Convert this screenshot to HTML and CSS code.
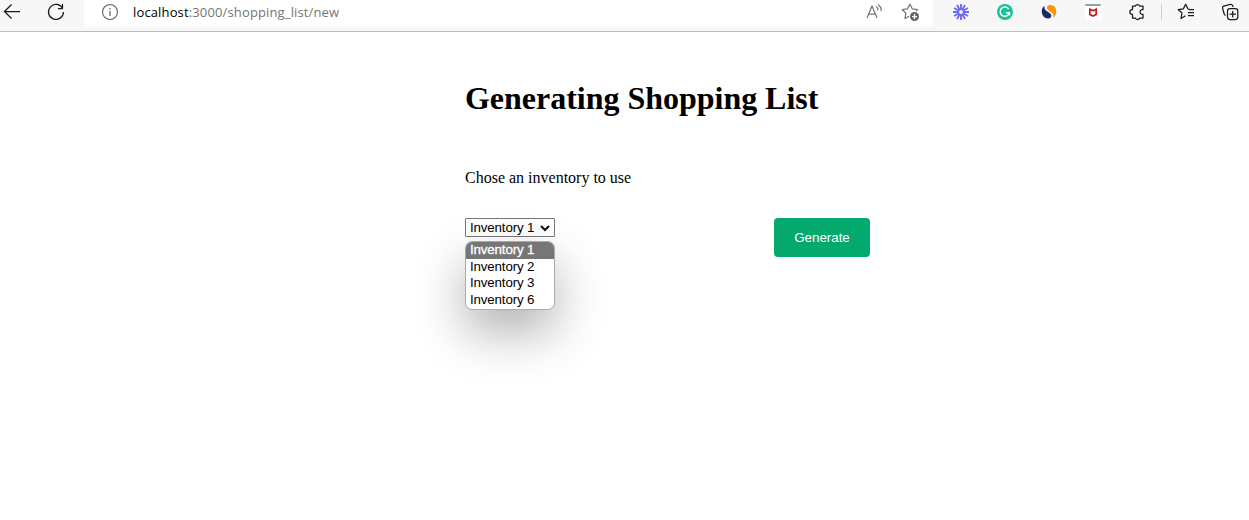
FILE: index.html
```html
<!DOCTYPE html>
<html lang="en">
<head>
<meta charset="utf-8">
<title>Generating Shopping List</title>
<link rel="stylesheet" href="styles.css">
</head>
<body>
<header class="toolbar">
  <svg class="icon back" viewBox="0 0 24 24"><path d="M20 11.5H4.5M11.500 4.500L4.500 11.500L11.500 18.500"/></svg>
  <svg class="icon reload" viewBox="0 0 24 24"><path d="M18.700 8.500A7.500 7.500 0 1 0 19.500 12M18.500 4V8.500H14"/></svg>
  <div class="address">
    <svg class="icon muted" viewBox="0 0 24 24"><circle cx="12" cy="12" r="7.500"/><path d="M12 11V16M12 8V9.500" stroke-width="1.400"/></svg>
    <span class="url">localhost<span class="path">:3000/shopping_list/new</span></span>
    <svg class="icon muted read" viewBox="0 0 24 24"><path d="M5 18L10 6L15 18M6.800 14H13.200M14.300 6.500Q16 8 16 10.500M16 4.500Q19.400 7 19.300 11"/></svg>
    <svg class="icon muted" viewBox="0 0 24 24"><path d="M11 16.300L7 18.500L7.900 13.200L4.200 9.700L9.400 8.900L12 4.200L14.300 8.900L19.500 9.700L18.300 11"/><circle cx="16.500" cy="16.500" r="4.500" fill="#666" stroke="none"/><path d="M14 16.500H19M16.500 14V19" stroke="#fff"/></svg>
  </div>
  <div class="extensions">
    <svg class="icon" viewBox="0 0 24 24"><path d="M12 4V20M4 12H20M8 5.100L16 18.900M16 5.100L8 18.900M5.100 8L18.900 16M5.100 16L18.900 8" stroke="#6f69f7" stroke-width="1.900"/><circle cx="12" cy="12" r="2.800" fill="#f7f7f7" stroke="#6f69f7" stroke-width="1.700"/></svg>
    <svg class="icon" viewBox="0 0 24 24"><circle cx="12" cy="12" r="8" fill="#15c39a" stroke="none"/><path d="M15.800 9A4.700 4.700 0 1 0 16.500 12.700H12.800M16.500 12.700V15.300" stroke="#fff" stroke-width="1.500"/></svg>
    <svg class="icon" viewBox="0 0 24 24"><path d="M8 5.500C3.500 8 3.800 15 8 17.700C11.500 19.500 14.500 18 14.300 15.500C14 12.500 8.500 11.500 7.500 8.500C7.200 7 7.500 6 8 5.500Z" fill="#202b5b" stroke="none"/><path d="M15.800 18C20.500 15.500 20.500 8 16 5.600C12.500 4 9.800 5.500 10 8C10.300 11 15.800 12 16.400 15C16.600 16.300 16.300 17.300 15.800 18Z" fill="#ff9500" stroke="none"/></svg>
    <svg class="icon" viewBox="0 0 24 24"><path d="M4 4H20V20H4Z" fill="#fff" stroke="none"/><path d="M5 5H19" stroke="#a09c9c" stroke-width="2" stroke-linecap="round"/><path d="M8 8L12 9.800L16 8V15L12 17L8 15ZM9.700 10.600V13.900L12 15L14.300 13.900V10.600L12 11.700Z" fill="#c01818" fill-rule="evenodd" stroke="none"/></svg>
    <svg class="icon" viewBox="0 0 24 24"><path d="M8 6H10.500Q10.800 4.500 12.500 4.500T14.700 6H18V9.700H17Q15 10 15 12T17 14.300H18V18H14.700Q14.200 19.500 12.500 19.500T10.500 18H7.500V14.300Q4.800 14.300 4.800 12T7.500 9.700V6Z"/></svg>
  </div>
  <div class="divider"></div>
  <svg class="icon" viewBox="0 0 24 24"><path d="M11.500 15.800L7 18.500L8 13L4.300 9.700L9.300 8.900L11.700 4.300L14 9L16 9.500M15 9.500H20M14 12.500H20M14 15.500H20"/></svg>
  <svg class="icon collections" viewBox="0 0 24 24"><path d="M7.500 15.500Q6.500 15 6.200 14L4.600 8.300Q4.200 6.700 5.700 6.200L12.200 4.400Q14 4 14.600 5.500L15.200 7"/><rect x="9.500" y="8.700" width="10.300" height="10.800" rx="2.500"/><path d="M11.500 14.200H18M14.700 11V17.500"/></svg>
</header>
<main class="content">
  <h1 class="title">Generating Shopping List</h1>
  <p class="prompt">Chose an inventory to use</p>
  <div class="controls">
    <div class="picker">
      <div class="select"><span>Inventory 1</span><svg class="arrow" viewBox="0 0 10 8"><path d="M1 2L5 6L9 2"/></svg></div>
      <ul class="menu">
        <li class="option selected">Inventory 1</li>
        <li class="option">Inventory 2</li>
        <li class="option tall">Inventory 3</li>
        <li class="option">Inventory 6</li>
      </ul>
    </div>
    <button class="generate">Generate</button>
  </div>
</main>
</body>
</html>
```
FILE: styles.css
```css
* { box-sizing: border-box; }
body { margin: 0; min-height: 100vh; background: #fff; color: #000; font-family: "Liberation Serif", "Times New Roman", serif; }
.toolbar { display: flex; height: 32px; background: #f7f7f7; border-bottom: 1px solid #bcbcbc; }
.icon { display: block; flex: none; width: 24px; height: 24px; fill: none; stroke: #1b1b1b; stroke-width: 1.25; stroke-linejoin: round; }
.muted { stroke: #757575; }
.reload { margin-left: 20px; }
.address { display: flex; flex: none; width: 849px; height: 27px; margin-left: 16px; padding: 0 11px 0 14px; background: #fff; border-radius: 0 0 4px 4px; }
.url { margin-left: 11px; font: 13px/24px "Open Sans", sans-serif; letter-spacing: 0.14px; white-space: nowrap; }
.path { color: #757575; }
.read { margin: 0 12px 0 auto; }
.extensions { display: flex; gap: 20px; margin-left: 16px; }
.divider { width: 1px; height: 16px; margin: 4px 12px 0; background: #cfcfcf; }
.collections { margin-left: 20px; }
.content { width: 405px; height: 488px; margin-left: 465px; padding-top: 48px; }
.title { margin: 0; font-size: 32px; line-height: 36px; letter-spacing: -0.02px; white-space: nowrap; }
.prompt { margin: 53px 0 31px; font-size: 16px; line-height: 18px; }
.controls { display: flex; justify-content: space-between; align-items: flex-start; }
.picker { position: relative; width: 90px; font: 13.333px/16px "Liberation Sans", Arial, sans-serif; letter-spacing: -0.15px; }
.select { display: flex; align-items: center; justify-content: space-between; height: 19px; padding: 0 4px; border: 1px solid #767676; border-radius: 1px; white-space: nowrap; }
.arrow { width: 10px; height: 8px; fill: none; stroke: #111; stroke-width: 2; }
.menu { position: absolute; top: 23px; left: 0; width: 90px; height: 69px; margin: 0; padding: 0; overflow: hidden; list-style: none; background: #fff; border: 1px solid #aaa; border-radius: 7px; box-shadow: 0 22px 50px rgba(0, 0, 0, 0.31); }
.option { height: 16px; padding-left: 4px; line-height: 16px; white-space: nowrap; }
.tall { height: 17px; }
.selected { height: 17px; color: #fff; background: #767676; -webkit-text-stroke: 0.3px #fff; }
.generate { width: 96px; height: 39px; padding: 0; border: 0; border-radius: 4px; background: #04aa6d; color: #fff; font: 13.333px "Liberation Sans", Arial, sans-serif; }
```
